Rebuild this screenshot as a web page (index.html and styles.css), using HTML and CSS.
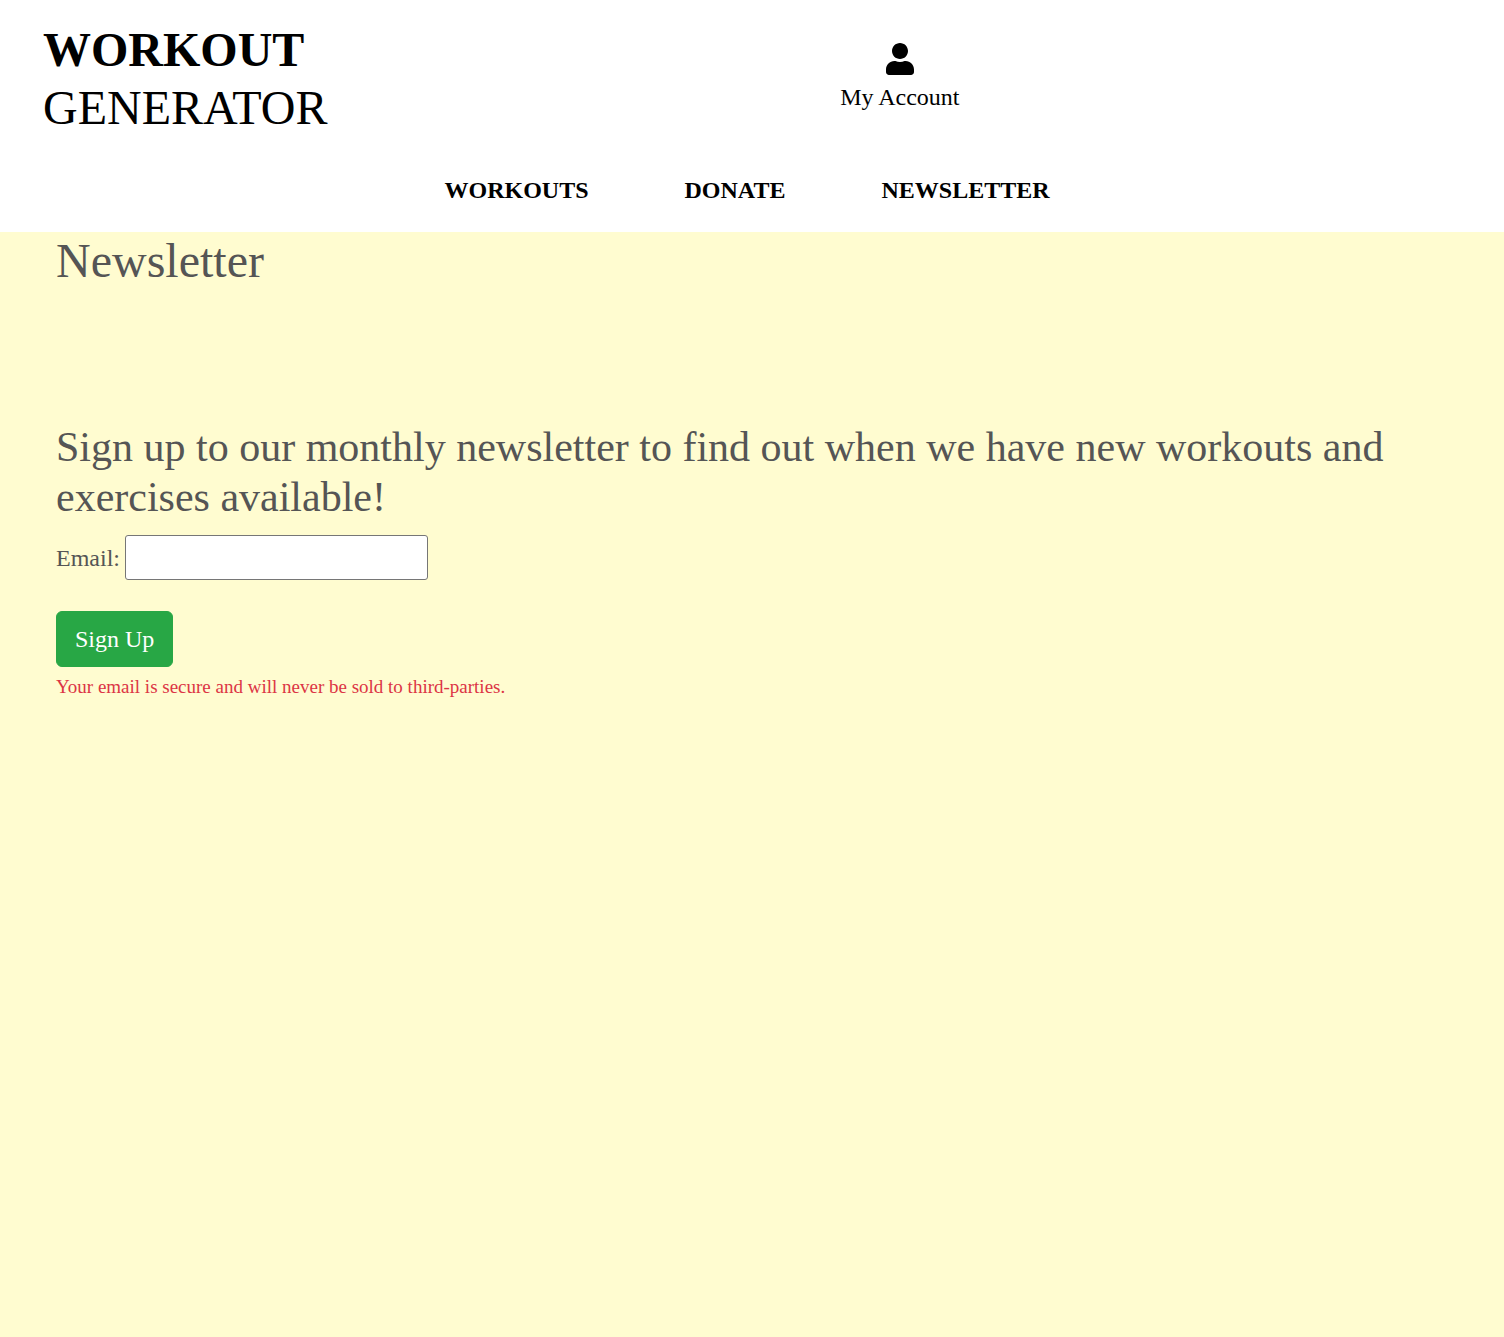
FILE: index.html
```html
<!DOCTYPE html>
<html lang="en">
<head>
  <meta charset="utf-8">
  <meta name="viewport" content="width=device-width, initial-scale=1">
  <title>Newsletter</title>
  <link rel="stylesheet" href="styles.css">
</head>
<body>
  <header class="site-header">
    <div class="header-top">
      <a class="brand" href="#"><strong>WORKOUT</strong><span>GENERATOR</span></a>
      <a class="account" href="#">
        <svg class="account-icon" viewBox="0 0 448 512" aria-hidden="true"><path d="M224 256c70.700 0 128-57.300 128-128S294.700 0 224 0 96 57.300 96 128s57.300 128 128 128zm89.600 32h-16.700c-22.200 10.200-46.900 16-72.900 16s-50.600-5.800-72.900-16h-16.700C60.200 288 0 348.200 0 422.400V464c0 26.500 21.500 48 48 48h352c26.500 0 48-21.500 48-48v-41.600c0-74.200-60.200-134.400-134.400-134.400z"/></svg>
        <span>My Account</span>
      </a>
    </div>
    <nav class="main-nav">
      <a href="#">WORKOUTS</a>
      <a href="#">DONATE</a>
      <a href="#">NEWSLETTER</a>
    </nav>
  </header>
  <main class="content">
    <h1>Newsletter</h1>
    <form class="signup">
      <h2>Sign up to our monthly newsletter to find out when we have new workouts and exercises available!</h2>
      <div class="field">
        <label for="email">Email:</label>
        <input id="email" type="email">
      </div>
      <button class="btn" type="submit">Sign Up</button>
      <small>Your email is secure and will never be sold to third-parties.</small>
    </form>
  </main>
</body>
</html>
```
FILE: styles.css
```css
* {
  box-sizing: border-box;
}

body {
  margin: 0;
  min-height: 100vh;
  background: #fffcd0;
  color: #555;
  font: 24px/36px "Liberation Serif", "Times New Roman", serif;
}

a {
  color: #000;
  text-decoration: none;
}

.site-header {
  padding: 21px 43px 24px;
  background: #fff;
}

.header-top {
  display: grid;
  grid-template-columns: 1fr 1fr 1fr 1fr 1fr;
  align-items: start;
}

.brand {
  grid-column: 1 / 3;
  display: flex;
  flex-direction: column;
  font-size: 48px;
  line-height: 58px;
}

.account {
  grid-column: 3 / 5;
  justify-self: center;
  display: flex;
  flex-direction: column;
  align-items: center;
  gap: 4px;
  padding: 22px 0 0 12px;
}

.account-icon {
  width: 28px;
  height: 32px;
}

.main-nav {
  display: flex;
  justify-content: center;
  gap: 96px;
  padding: 35px 10px 0 0;
  font-weight: bold;
}

.content {
  padding: 0 56px;
}

h1,
h2 {
  margin: 0;
  font-weight: normal;
}

h1 {
  font-size: 48px;
  line-height: 58px;
}

.signup {
  padding-top: 132px;
}

h2 {
  margin-bottom: 13px;
  font-size: 42px;
  line-height: 50px;
}

.field {
  display: flex;
  align-items: center;
  gap: 5px;
  margin-bottom: 31px;
}

.field input {
  width: 303px;
  height: 45px;
  padding: 1px 2px;
  border: 1px solid #767676;
  border-radius: 3px;
  background: #fff;
  font: inherit;
}

.btn {
  display: block;
  padding: 9px 18px;
  border: 1px solid #28a745;
  border-radius: 6px;
  background: #28a745;
  color: #fff;
  font: inherit;
}

small {
  display: block;
  margin-top: 5px;
  color: #dc3545;
  font-size: 19px;
  line-height: 29px;
}
```
